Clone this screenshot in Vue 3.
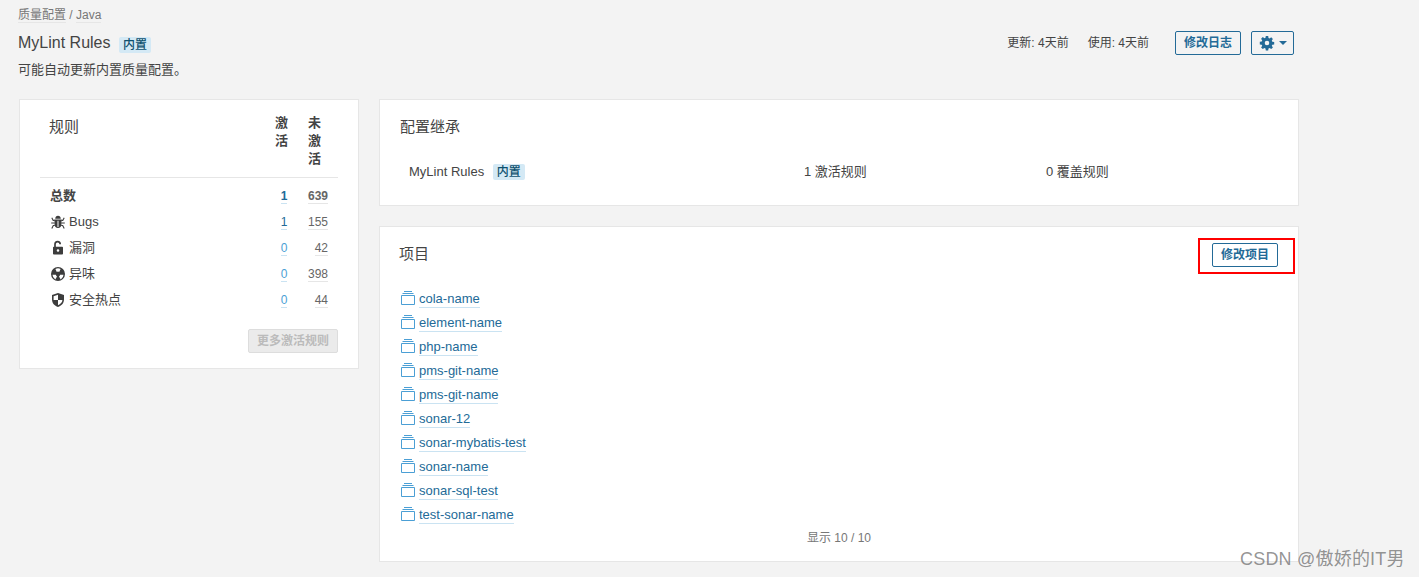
<script setup>
const rows = [
  { key: 'bug', name: 'Bugs', active: 1, inactive: 155 },
  { key: 'vuln', name: '漏洞', active: 0, inactive: 42 },
  { key: 'smell', name: '异味', active: 0, inactive: 398 },
  { key: 'hot', name: '安全热点', active: 0, inactive: 44 }
]
const projects = ['cola-name', 'element-name', 'php-name', 'pms-git-name', 'pms-git-name', 'sonar-12', 'sonar-mybatis-test', 'sonar-name', 'sonar-sql-test', 'test-sonar-name']
</script>

<template>
  <div class="page">
    <div class="crumbs"><a class="crumb">质量配置</a> / <a class="crumb">Java</a></div>
    <header class="head">
      <h1 class="title">MyLint Rules <span class="badge big">内置</span></h1>
      <div class="meta">
        <span class="meta-a">更新: 4天前</span>
        <span class="meta-b">使用: 4天前</span>
        <button class="btn log">修改日志</button>
        <button class="btn gear">
          <svg width="16" height="16" viewBox="0 0 16 16">
            <path fill="#236a97" fill-rule="evenodd" d="M6.800 1h2.400l.3 1.900 1.100.5 1.600-1.100 1.700 1.700-1.100 1.600.5 1.100 1.900.3v2.400l-1.900.3-.5 1.100 1.100 1.600-1.700 1.700-1.600-1.100-1.100.5-.3 1.900H6.800l-.3-1.900-1.100-.5-1.600 1.100-1.700-1.700 1.100-1.600-.5-1.100-1.900-.3V6.800l1.900-.3.5-1.100-1.100-1.600 1.700-1.700 1.600 1.100 1.100-.5zM8 5.700a2.300 2.300 0 1 0 0 4.600 2.300 2.300 0 0 0 0-4.600z" />
          </svg>
          <span class="caret"></span>
        </button>
      </div>
    </header>
    <p class="note">可能自动更新内置质量配置。</p>

    <div class="columns">
      <section class="card stats">
        <div class="stats-head">
          <span class="stats-title">规则</span>
          <span class="th th-a">激活</span>
          <span class="th th-b">未激活</span>
        </div>
        <div class="stat total">
          <span class="stat-name">总数</span>
          <span class="cell-a"><a class="num active">1</a></span>
          <span class="cell-b"><a class="num">639</a></span>
        </div>
        <div v-for="r in rows" :key="r.key" class="stat">
          <span class="stat-name">
            <svg class="ico" width="16" height="16" viewBox="0 0 16 16" fill="#3d3d3d">
              <template v-if="r.key === 'bug'">
                <path d="M5.200 4.800C5.300 3 6.400 1.800 8 1.800s2.700 1.200 2.800 3z" />
                <path fill-rule="evenodd" d="M4.500 5.600h7V10c0 2.400-1.500 4-3.500 4s-3.500-1.600-3.500-4zM7.500 6.800V13h1V6.800z" />
                <path fill="none" stroke="#3d3d3d" stroke-width="1.100" d="M1.800 3.800l1.400 2.600h1.600M14.200 3.800l-1.400 2.600h-1.600M1.200 9h3.400M14.800 9h-3.400M1.800 14.500l1.500-3h1.500M14.200 14.500l-1.500-3h-1.500" />
              </template>
              <template v-else-if="r.key === 'vuln'">
                <path fill="none" stroke="#3d3d3d" stroke-width="1.700" d="M5 7V4.300C5 2.700 6.200 1.600 7.600 1.600S10.200 2.700 10.200 4.300" />
                <path fill-rule="evenodd" d="M3.800 6.700h8.400c.4 0 .8.400.8.800v6.200c0 .4-.4.800-.8.800H3.800c-.4 0-.8-.4-.8-.8V7.500c0-.4.400-.8.800-.8zM8 9.200a1.300 1.300 0 1 0 0 2.600 1.300 1.300 0 0 0 0-2.600z" />
              </template>
              <path v-else-if="r.key === 'smell'" fill-rule="evenodd" d="M8 1a7 7 0 1 0 0 14A7 7 0 0 0 8 1zM5.400 2.900a5.600 5.600 0 0 1 5.200 0L9.200 6a2.200 2.200 0 0 0-2.400 0zM2.500 8.700h3.400c.1.800.5 1.400 1.100 1.800l-1.700 2.900a5.600 5.600 0 0 1-2.800-4.700zm11 0a5.600 5.600 0 0 1-2.800 4.700L9 10.500c.6-.4 1-1 1.100-1.800z" />
              <path v-else fill-rule="evenodd" d="M8 1l6 2v4.500c0 3.600-2.500 6.300-6 7.500-3.500-1.200-6-3.900-6-7.500V3zm0 1.800L3.600 4.200V8H8zM8 8v5.200c2.500-1 4.300-2.800 4.400-5.200z" />
            </svg>{{ r.name }}
          </span>
          <span class="cell-a"><a class="num active">{{ r.active }}</a></span>
          <span class="cell-b"><a class="num">{{ r.inactive }}</a></span>
        </div>
        <div class="stats-foot"><button class="btn off">更多激活规则</button></div>
      </section>

      <div class="side">
        <section class="card inherit">
          <h2 class="card-title">配置继承</h2>
          <div class="inherit-row">
            <span class="inherit-name">MyLint Rules <span class="badge">内置</span></span>
            <span class="inherit-active">1 激活规则</span>
            <span>0 覆盖规则</span>
          </div>
        </section>

        <section class="card projects">
          <div class="projects-head">
            <h2 class="card-title">项目</h2>
            <div class="mark-wrap">
              <button class="btn">修改项目</button>
              <span class="mark"></span>
            </div>
          </div>
          <ul class="list">
            <li v-for="(p, i) in projects" :key="i" class="item">
              <svg class="pico" width="14" height="14" viewBox="0 0 14 14" fill="none" stroke="#4b9fd5">
                <path d="M3 .5h8M1.500 2.500h11M.5 4.500h13v9H.5z" />
              </svg>
              <a class="plink">{{ p }}</a>
            </li>
          </ul>
          <div class="shown">显示 10 / 10</div>
        </section>
      </div>
    </div>
    <div class="watermark">CSDN @傲娇的IT男</div>
  </div>
</template>

<style>
html, body { margin: 0; background: #f3f3f3; }
</style>

<style scoped>
.page {
  position: relative;
  box-sizing: border-box;
  width: 1419px;
  height: 577px;
  overflow: hidden;
  padding: 8px 120px 0 19px;
  background: #f3f3f3;
  color: #444;
  font: 13px/16px "Liberation Sans", "Noto Sans CJK SC", sans-serif;
}
a { text-decoration: none; }
.crumbs { color: #777; font-size: 12px; line-height: 15px; margin-left: -1px; }
.crumb { border-bottom: 1px solid #e6e6e6; }
.head { display: flex; justify-content: space-between; align-items: center; height: 24px; margin-top: 8px; }
.title { margin: 0 0 0 -1px; font-size: 16px; font-weight: 400; line-height: 24px; }
.badge {
  display: inline-block;
  margin-left: 5px;
  padding: 0 4px;
  border-radius: 2px;
  background: #d4e9f5;
  color: #0e516f;
  font-size: 12px;
  font-weight: 500;
  line-height: 16px;
  vertical-align: 0;
}
.badge.big { margin-left: 4px; vertical-align: -1px; }
.meta { display: flex; align-items: center; margin-right: 5px; font-size: 12px; }
.meta-a { margin-right: 19px; }
.meta-b { margin-right: 26px; }
.btn {
  box-sizing: border-box;
  height: 24px;
  padding: 0 8px;
  border: 1px solid #236a97;
  border-radius: 2px;
  background: transparent;
  color: #236a97;
  font: 600 12px/22px "Liberation Sans", "Noto Sans CJK SC", sans-serif;
}
.log { width: 66px; }
.gear { display: flex; align-items: center; justify-content: center; gap: 4px; width: 43px; margin-left: 10px; padding: 0; }
.caret { border-top: 4px solid #236a97; border-left: 4px solid transparent; border-right: 4px solid transparent; }
.note { margin: 6px 0 0 -1px; line-height: 18px; }
.columns { display: flex; align-items: flex-start; gap: 20px; margin-top: 20px; }
.card { box-sizing: border-box; background: #fff; border: 1px solid #e6e6e6; }
.stats { width: 340px; height: 270px; padding: 14px 20px 0; }
.stats-head { display: flex; padding: 0 0 9px 9px; border-bottom: 1px solid #e6e6e6; }
.stats-title { flex: 1; font-size: 15px; line-height: 26px; }
.th { width: 13px; font-weight: 700; line-height: 18px; }
.th-a { margin-right: 20px; }
.th-b { margin-right: 17px; }
.stat { display: flex; align-items: center; height: 26px; padding-left: 10px; }
.total { margin-top: 5px; font-weight: 700; }
.stat-name { flex: 1; display: flex; align-items: center; }
.ico { margin-right: 3px; }
.cell-a { width: 20px; text-align: center; font-size: 12px; }
.cell-b { width: 34px; margin-right: 10px; text-align: right; font-size: 12px; }
.num { color: #666; border-bottom: 1px solid #e6e6e6; }
.num.active { color: #4b9fd5; border-bottom-color: #cae3f2; }
.total .num.active { color: #236a97; }
.stat:nth-of-type(3) .num.active { color: #236a97; }
.stats-foot { display: flex; justify-content: flex-end; margin-top: 16px; }
.off { width: 90px; padding: 0; border-color: #ddd; background: #ebebeb; color: #bbb; }
.side { flex: 1; display: flex; flex-direction: column; gap: 20px; }
.inherit { height: 107px; padding: 17px 20px 0; }
.card-title { margin: 0; font-size: 15px; font-weight: 400; line-height: 20px; }
.inherit-row { display: flex; align-items: center; margin-top: 25px; padding-left: 9px; line-height: 20px; }
.inherit-name { width: 395px; }
.inherit-active { width: 242px; }
.projects { height: 336px; padding: 15px 20px 0; }
.projects-head { display: flex; justify-content: space-between; align-items: center; height: 24px; }
.projects-head .card-title { margin-left: -1px; }
.mark-wrap { position: relative; top: 1px; }
.mark { position: absolute; left: -14px; top: -5px; width: 97px; height: 36px; box-sizing: border-box; border: 2px solid #f00; pointer-events: none; }
.list { margin: 21px 0 0; padding: 0; list-style: none; }
.item { display: flex; align-items: center; gap: 4px; height: 24px; }
.pico { margin: -2px 0 0 1px; }
.plink { color: #236a97; border-bottom: 1px solid #cae3f2; line-height: 16px; }
.shown { margin-top: -1px; text-align: center; color: #777; font-size: 12px; line-height: 24px; }
.watermark { position: absolute; left: 1240px; top: 547px; color: rgba(90, 90, 90, .65); font: 18px/24px "Liberation Sans", "Noto Sans CJK SC", sans-serif; letter-spacing: .2px; }
</style>
